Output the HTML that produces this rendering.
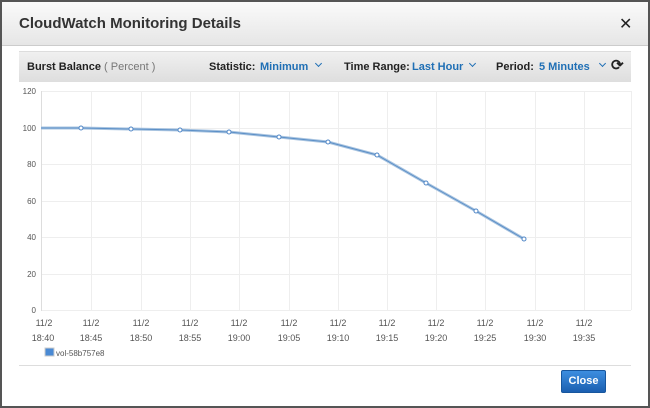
<!DOCTYPE html>
<html><head><style>
body{margin:0;width:650px;height:408px;overflow:hidden;font-family:"Liberation Sans",Arial,sans-serif;background:#fff}
.frame{position:absolute;left:0;top:0;width:646px;height:404px;border:2px solid #555;background:#fff}
.hdr{position:absolute;left:0;top:0;width:646px;height:43px;background:linear-gradient(#fafafa,#e6e6e6);border-bottom:1px solid #ccc}
.hdr h1{position:absolute;left:17px;top:13px;margin:0;font-size:15px;font-weight:bold;color:#333}
.x{position:absolute;left:617px;top:12px;font-size:16px;color:#222}
.tb{position:absolute;left:17px;top:49px;width:612px;height:30px;background:linear-gradient(#f0f0f0,#dedede);border-top:1px solid #ddd;font-size:11px;color:#222}
.tb span{position:absolute;top:9px}
.b{font-weight:bold}
.blue{color:#1f6fb5;font-weight:bold}
.chev{position:absolute;top:9px;width:4px;height:4px;border-right:1.5px solid #1f6fb5;border-bottom:1.5px solid #1f6fb5;transform:rotate(45deg)}
.btn{position:absolute;left:561px;top:370px;width:43px;height:21px;background:linear-gradient(#3d8ee0,#1b5fb0);border:1px solid #17569e;border-radius:2px;color:#fff;font-weight:bold;font-size:11px;text-align:center;line-height:21px}
</style></head><body>
<div class="frame">
<div class="hdr"><h1>CloudWatch Monitoring Details</h1><div class="x">✕</div></div>
<div class="tb">
<span class="b" style="left:8px">Burst Balance <span style="position:static;font-weight:normal;color:#777">( Percent )</span></span>
<span class="b" style="left:190px">Statistic:</span>
<span class="blue" style="left:241px">Minimum</span><div class="chev" style="left:297px"></div>
<span class="b" style="left:325px">Time Range:</span>
<span class="blue" style="left:393px">Last Hour</span><div class="chev" style="left:451px"></div>
<span class="b" style="left:477px">Period:</span>
<span class="blue" style="left:520px">5 Minutes</span><div class="chev" style="left:581px"></div>
<span style="left:592px;top:4px;font-size:15px;font-weight:bold">⟳</span>
</div>
</div>
<svg style="position:absolute;left:0;top:0" width="650" height="408" font-family="Liberation Sans,Arial,sans-serif" font-size="9" fill="#555">
<g stroke="#eee" stroke-width="1">
<line x1="91.5" y1="91" x2="91.5" y2="310"/><line x1="141.5" y1="91" x2="141.5" y2="310"/><line x1="190.5" y1="91" x2="190.5" y2="310"/><line x1="239.5" y1="91" x2="239.5" y2="310"/><line x1="289.5" y1="91" x2="289.5" y2="310"/><line x1="338.5" y1="91" x2="338.5" y2="310"/><line x1="387.5" y1="91" x2="387.5" y2="310"/><line x1="436.5" y1="91" x2="436.5" y2="310"/><line x1="485.5" y1="91" x2="485.5" y2="310"/><line x1="535.5" y1="91" x2="535.5" y2="310"/><line x1="584.5" y1="91" x2="584.5" y2="310"/><line x1="631.5" y1="91" x2="631.5" y2="310"/>
<line x1="41" y1="91.5" x2="631" y2="91.5"/><line x1="41" y1="128.5" x2="631" y2="128.5"/><line x1="41" y1="164.5" x2="631" y2="164.5"/><line x1="41" y1="201.5" x2="631" y2="201.5"/><line x1="41" y1="237.5" x2="631" y2="237.5"/><line x1="41" y1="274.5" x2="631" y2="274.5"/><line x1="41" y1="310.5" x2="631" y2="310.5"/>
</g>
<line x1="41.5" y1="91" x2="41.5" y2="311" stroke="#ddd"/>
<g font-size="8" text-anchor="end"><text x="36" y="94">120</text><text x="36" y="131">100</text><text x="36" y="167">80</text><text x="36" y="204">60</text><text x="36" y="240">40</text><text x="36" y="277">20</text><text x="36" y="313">0</text></g>
<polyline fill="none" stroke="#a9c4e0" stroke-width="3" points="41,128 81,128 131,129 180,130 229,132 279,137 328,142 377,155 426,183 476,211 524,239"/>
<polyline fill="none" stroke="#5b8fc7" stroke-width="1" points="41,128 81,128 131,129 180,130 229,132 279,137 328,142 377,155 426,183 476,211 524,239"/>
<g fill="#fff" stroke="#4f86c6" stroke-width="1"><circle cx="81" cy="128" r="2"/><circle cx="131" cy="129" r="2"/><circle cx="180" cy="130" r="2"/><circle cx="229" cy="132" r="2"/><circle cx="279" cy="137" r="2"/><circle cx="328" cy="142" r="2"/><circle cx="377" cy="155" r="2"/><circle cx="426" cy="183" r="2"/><circle cx="476" cy="211" r="2"/><circle cx="524" cy="239" r="2"/></g>
<g text-anchor="middle">
<text x="44" y="326">11/2</text><text x="91" y="326">11/2</text><text x="141" y="326">11/2</text><text x="190" y="326">11/2</text><text x="239" y="326">11/2</text><text x="289" y="326">11/2</text><text x="338" y="326">11/2</text><text x="387" y="326">11/2</text><text x="436" y="326">11/2</text><text x="485" y="326">11/2</text><text x="535" y="326">11/2</text><text x="584" y="326">11/2</text>
<text x="43" y="341">18:40</text><text x="91" y="341">18:45</text><text x="141" y="341">18:50</text><text x="190" y="341">18:55</text><text x="239" y="341">19:00</text><text x="289" y="341">19:05</text><text x="338" y="341">19:10</text><text x="387" y="341">19:15</text><text x="436" y="341">19:20</text><text x="485" y="341">19:25</text><text x="535" y="341">19:30</text><text x="584" y="341">19:35</text>
</g>
<rect x="45" y="348" width="9" height="8" fill="#4a8ad4" stroke="#ccc"/>
<text x="56" y="356" font-size="8">vol-58b757e8</text>
<line x1="19" y1="365.5" x2="631" y2="365.5" stroke="#ddd"/>
</svg>
<div class="btn">Close</div>
</body></html>
